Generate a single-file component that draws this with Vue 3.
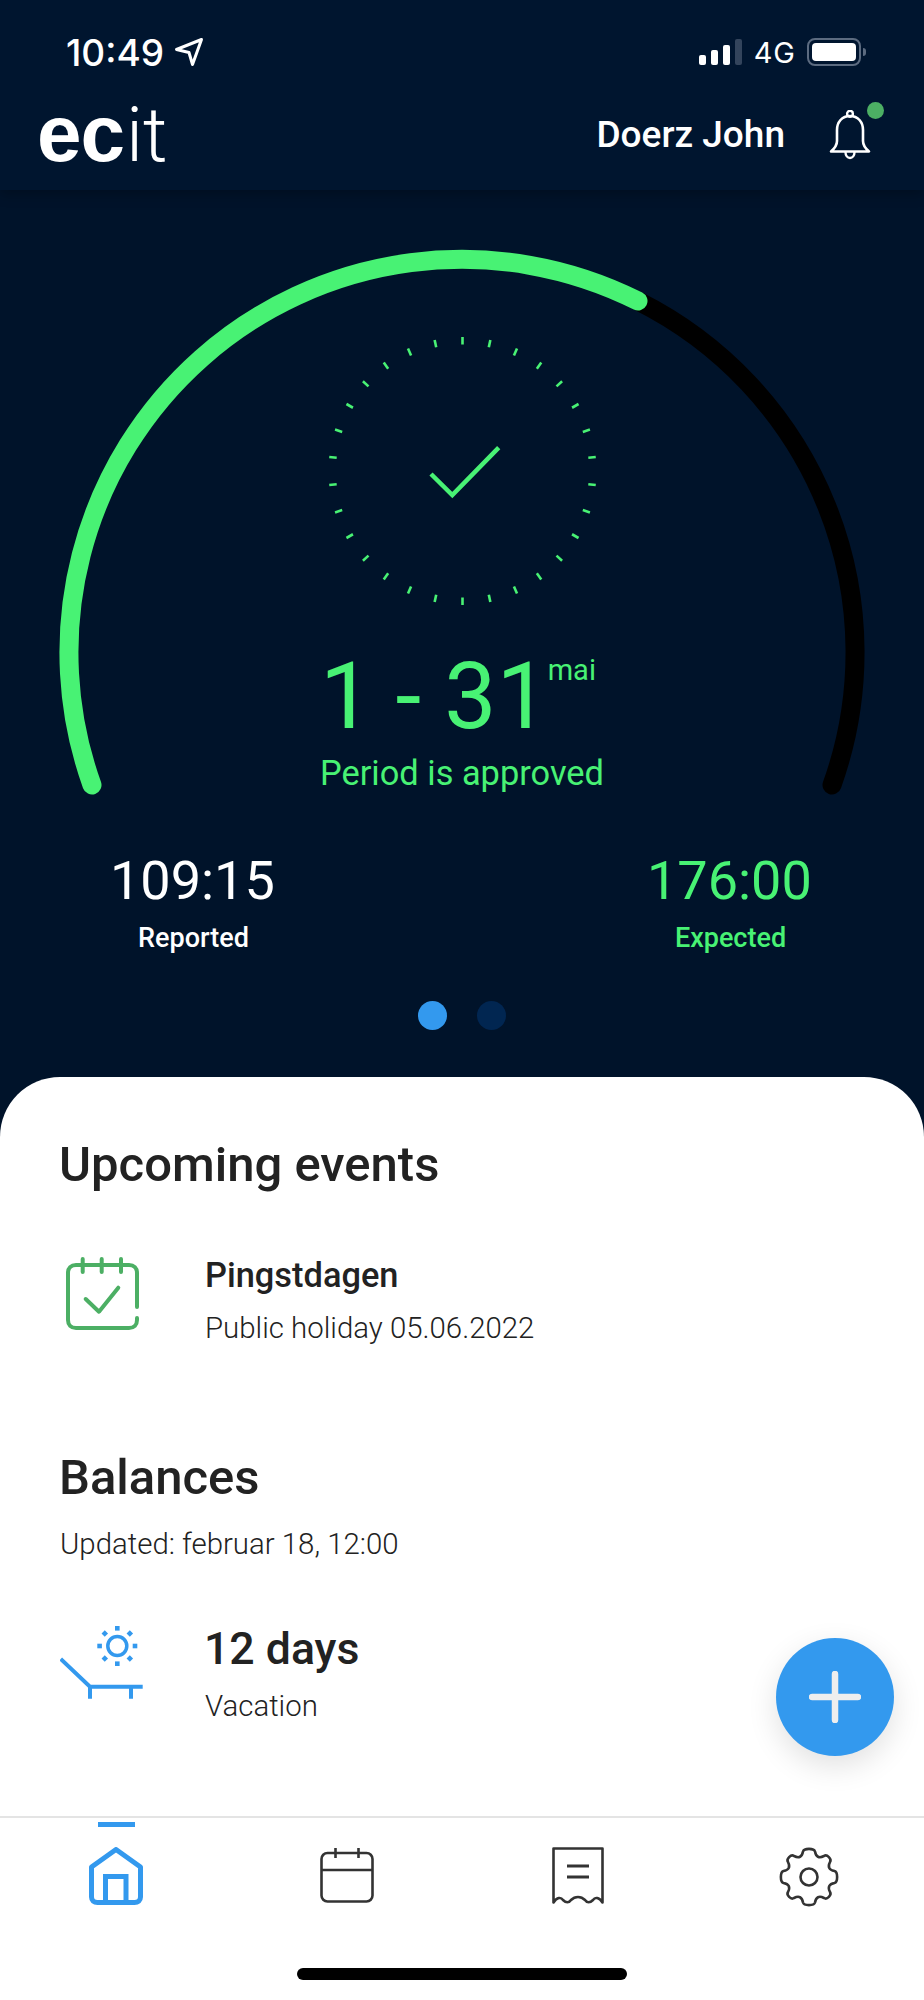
<script setup>
const ticks = Array.from({ length: 30 }, (_, i) => {
  const a = (i * 12 * Math.PI) / 180
  const cx = 462.5
  const cy = 471
  return {
    x1: cx + 126.5 * Math.sin(a),
    y1: cy - 126.5 * Math.cos(a),
    x2: cx + 134 * Math.sin(a),
    y2: cy - 134 * Math.cos(a)
  }
})
const rays = [0, 45, 90, 135, 180, 225, 270, 315]
</script>

<template>
  <div class="app">
    <header class="top">
      <div class="status">
        <div class="status-left">
          <span class="time">10:49</span>
          <svg class="nav-arrow" viewBox="0 0 30 30" width="30" height="30">
            <path d="M27.500 2.500 2.500 12.500 15 15.500 18.500 27.500Z" fill="none" stroke="#fff" stroke-width="3" stroke-linejoin="round" />
          </svg>
        </div>
        <div class="status-right">
          <div class="signal">
            <i class="bar b1"></i><i class="bar b2"></i><i class="bar b3"></i><i class="bar b4"></i>
          </div>
          <span class="net">4G</span>
          <div class="battery"><div class="battery-fill"></div></div>
          <div class="battery-nub"></div>
        </div>
      </div>
      <div class="brand-row">
        <div class="logo"><b>ec</b><span>it</span></div>
        <div class="user">
          <span class="user-name">Doerz John</span>
          <div class="bell">
            <svg viewBox="0 0 42 50" width="42" height="50">
              <path d="M2 41.500c3.500-3 6-5.500 6-10.500V20c0-8 5-14 13-14s13 6 13 14v11c0 5 2.500 7.500 6 10.500Z" fill="none" stroke="#fff" stroke-width="2.600" stroke-linejoin="round" />
              <circle cx="21" cy="3.800" r="2.900" fill="none" stroke="#fff" stroke-width="2.400" />
              <path d="M16.500 42c0 3.500 2 6 4.500 6s4.500-2.500 4.500-6" fill="none" stroke="#fff" stroke-width="2.400" />
            </svg>
            <span class="bell-dot"></span>
          </div>
        </div>
      </div>
    </header>

    <section class="hero">
      <svg class="dial" viewBox="0 190 924 640" width="924" height="640">
        <path d="M638 301A393 393 0 0 1 832 785" fill="none" stroke="#000" stroke-width="19" stroke-linecap="round" />
        <path d="M92 785A393 393 0 0 1 638 301" fill="none" stroke="#48f274" stroke-width="19" stroke-linecap="round" />
        <line v-for="(t, i) in ticks" :key="i" :x1="t.x1" :y1="t.y1" :x2="t.x2" :y2="t.y2" stroke="#48f274" stroke-width="2.600" />
        <path d="M431 474 452.300 495 498.700 447.700" fill="none" stroke="#48f274" stroke-width="4.500" />
      </svg>

      <div class="period">
        <div class="period-range">
          <span>1 - 31</span>
          <sup class="period-month">mai</sup>
        </div>
        <div class="period-state">Period is approved</div>
      </div>

      <div class="totals">
        <div class="total">
          <div class="total-value">109:15</div>
          <div class="total-label">Reported</div>
        </div>
        <div class="total green">
          <div class="total-value">176:00</div>
          <div class="total-label">Expected</div>
        </div>
      </div>

      <div class="dots">
        <span class="dot active"></span>
        <span class="dot"></span>
      </div>
    </section>

    <main class="sheet">
      <h2 class="title">Upcoming events</h2>
      <div class="row event">
        <svg class="row-icon" viewBox="0 0 90 76" width="90" height="76">
          <path d="M77 50V16c0-5-3-8-8-8H16c-5 0-8 3-8 8v47c0 5 3 8 8 8h53c5 0 8-3 8-8v-2" fill="none" stroke="#4caf64" stroke-width="4" stroke-linecap="round" />
          <path d="M22.700 2v13M41.700 2v13M61 2v13" stroke="#4caf64" stroke-width="4" stroke-linecap="round" />
          <path d="M25.700 42 39 54.700 58.300 30.700" fill="none" stroke="#4caf64" stroke-width="4" stroke-linecap="round" stroke-linejoin="round" />
        </svg>
        <div>
          <div class="row-head">Pingstdagen</div>
          <div class="row-sub">Public holiday 05.06.2022</div>
        </div>
      </div>

      <h2 class="title balances">Balances</h2>
      <div class="updated">Updated: februar 18, 12:00</div>
      <div class="row balance">
        <svg class="row-icon sun-icon" viewBox="0 0 90 80" width="90" height="80">
          <path d="M.700 35 30 62.700H82.700M30 62.700V74.700M71 62.700V74.700" fill="none" stroke="#3399ee" stroke-width="4" />
          <circle cx="57.300" cy="22" r="9.500" fill="none" stroke="#3399ee" stroke-width="3.500" />
          <rect v-for="r in rays" :key="r" x="55" y="2" width="4.600" height="4.600" fill="#3399ee" :transform="`rotate(${r} 57.300 22)`" />
        </svg>
        <div>
          <div class="row-big">12 days</div>
          <div class="row-sub">Vacation</div>
        </div>
      </div>
      <button class="fab">
        <svg viewBox="0 0 52 52" width="52" height="52">
          <path d="M26 3v46M3 26h46" stroke="#eee" stroke-width="6.500" stroke-linecap="round" />
        </svg>
      </button>
    </main>

    <nav class="tabs">
      <div class="tab active">
        <span class="tab-mark"></span>
        <svg viewBox="0 0 54 58" width="54" height="58">
          <path d="M27 2.500 51.500 20V50c0 3.500-2.500 5.500-6 5.500H8.500c-3.500 0-6-2-6-5.500V20Z" fill="none" stroke="#3399ee" stroke-width="5" stroke-linejoin="round" />
          <path d="M16.500 56V29.500H37V56" fill="none" stroke="#3399ee" stroke-width="5" />
        </svg>
      </div>
      <div class="tab">
        <svg viewBox="0 0 54 56" width="54" height="56">
          <rect x="1.500" y="6" width="51" height="48.500" rx="6" fill="none" stroke="#333" stroke-width="2.600" />
          <path d="M1.500 23H52.500M15.500 1V11M38.500 1V11" stroke="#333" stroke-width="2.600" />
        </svg>
      </div>
      <div class="tab">
        <svg viewBox="0 0 52 58" width="52" height="58">
          <path d="M1.500 1.500H50.500V55.500C47 50 43 50 41 53 38 56 35 56 33 53 30 50 26 50 26 50 26 50 22 50 19 53 17 56 14 56 11 53 9 50 5 50 1.500 55.500Z" fill="none" stroke="#333" stroke-width="2.600" stroke-linejoin="round" />
          <path d="M15 19H37M15 30H37" stroke="#333" stroke-width="2.800" />
        </svg>
      </div>
      <div class="tab">
        <svg viewBox="0 0 60 60" width="60" height="60">
          <path d="M24 4.500C25 1 35 1 36 4.500 37 10 40 11.500 45 9 48 7 53 12 51 15 48.500 20 50 23 55.500 24 59 25 59 35 55.500 36 50 37 48.500 40 51 45 53 48 48 53 45 51 40 48.500 37 50 36 55.500 35 59 25 59 24 55.500 23 50 20 48.500 15 51 12 53 7 48 9 45 11.500 40 10 37 4.500 36 1 35 1 25 4.500 24 10 23 11.500 20 9 15 7 12 12 7 15 9 20 11.500 23 10 24 4.500Z" fill="none" stroke="#333" stroke-width="2.600" stroke-linejoin="round" />
          <circle cx="30" cy="30" r="8.500" fill="none" stroke="#333" stroke-width="2.600" />
        </svg>
      </div>
    </nav>
    <div class="home-bar"></div>
  </div>
</template>

<style>
body {
  margin: 0;
  background: #fff;
}
</style>

<style scoped>
.app {
  position: relative;
  width: 924px;
  height: 2000px;
  overflow: hidden;
  background: #00132a;
  font-family: Roboto, "Liberation Sans", sans-serif;
}

.top {
  height: 190px;
  box-sizing: border-box;
  background: #00152f;
  box-shadow: 0 4px 12px rgba(0, 0, 0, 0.25);
  color: #fff;
  position: relative;
  z-index: 1;
}

.status {
  display: flex;
  justify-content: space-between;
  align-items: center;
  height: 52px;
  padding: 26px 58px 0 66px;
}

.status-left {
  display: flex;
  align-items: center;
  gap: 10px;
}

.time {
  font-family: Inter, sans-serif;
  font-size: 37px;
  font-weight: 500;
}

.status-right {
  display: flex;
  align-items: center;
}

.signal {
  display: flex;
  align-items: flex-end;
  gap: 5px;
  height: 26px;
  margin-right: 12px;
}

.bar {
  display: block;
  width: 7px;
  border-radius: 2px;
  background: #fff;
}

.b1 { height: 10px; }
.b2 { height: 15px; }
.b3 { height: 20px; }
.b4 { height: 26px; background: #33445c; }

.net {
  font-family: Inter, sans-serif;
  font-size: 29px;
  letter-spacing: 1px;
  margin-right: 11px;
}

.battery {
  width: 54px;
  height: 28px;
  box-sizing: border-box;
  border: 2px solid #5c6b80;
  border-radius: 8px;
  padding: 3px;
}

.battery-fill {
  height: 100%;
  border-radius: 4px;
  background: #fff;
}

.battery-nub {
  width: 3px;
  height: 8px;
  margin-left: 2px;
  border-radius: 0 3px 3px 0;
  background: #5c6b80;
}

.brand-row {
  display: flex;
  justify-content: space-between;
  align-items: center;
  padding: 16px 53px 0 37px;
}

.logo {
  font-family: "Liberation Sans", sans-serif;
  font-size: 80px;
  line-height: 80px;
  letter-spacing: -1px;
}

.logo b {
  font-weight: 700;
}

.logo span {
  font-family: Roboto, sans-serif;
  font-size: 76px;
  font-weight: 300;
  letter-spacing: 0;
  margin-left: 2px;
}

.user {
  display: flex;
  align-items: center;
  gap: 44px;
}

.user-name {
  font-size: 37px;
  font-weight: 500;
}

.bell {
  position: relative;
  width: 42px;
  height: 50px;
}

.bell-dot {
  position: absolute;
  top: -8px;
  left: 38px;
  width: 17px;
  height: 17px;
  border-radius: 50%;
  background: #4caf64;
}

.hero {
  position: relative;
  height: 887px;
  box-sizing: border-box;
  padding-top: 453px;
}

.dial {
  position: absolute;
  top: 0;
  left: 0;
}

.period {
  position: relative;
  text-align: center;
  color: #48f274;
}

.period-range {
  display: flex;
  justify-content: center;
  align-items: flex-start;
  font-size: 93px;
  font-weight: 400;
  line-height: 108px;
}

.period-month {
  margin: 11px 8px 0 -1px;
  font-size: 29px;
  font-weight: 400;
  line-height: 32px;
}

.period-state {
  font-size: 34.4px;
  line-height: 44px;
}

.totals {
  display: grid;
  grid-template-columns: repeat(2, 164px);
  justify-content: space-between;
  padding: 54px 113px 0 110px;
}

.total {
  text-align: center;
  color: #fff;
}

.total.green {
  color: #48f274;
}

.total-value {
  font-size: 54px;
  font-weight: 400;
  line-height: 64px;
}

.total-label {
  font-size: 27px;
  font-weight: 500;
  line-height: 36px;
  margin-top: 7px;
  margin-left: 3px;
}

.dots {
  display: flex;
  justify-content: center;
  gap: 30px;
  margin-top: 45px;
}

.dot {
  width: 29px;
  height: 29px;
  border-radius: 50%;
  background: #012651;
}

.dot.active {
  background: #3399ee;
}

.sheet {
  position: relative;
  height: 739px;
  box-sizing: border-box;
  padding: 60px 60px 0;
  border-radius: 60px 60px 0 0;
  background: #fff;
  color: #222;
  z-index: 2;
}

.title {
  margin: 0 0 0 -1px;
  font-size: 49px;
  font-weight: 500;
  line-height: 56px;
}

.row {
  display: flex;
  align-items: flex-start;
}

.row-icon {
  flex: none;
  margin-right: 55px;
  margin-top: 2px;
}

.sun-icon {
  margin-top: -1px;
}

.event {
  margin-top: 62px;
}

.row-head {
  font-size: 34.4px;
  font-weight: 500;
  line-height: 40px;
}

.row-big {
  font-size: 44.6px;
  font-weight: 500;
  line-height: 48px;
  margin-left: -1px;
}

.row-sub {
  margin-top: 13px;
  font-size: 29.4px;
  font-weight: 300;
  line-height: 40px;
}

.balances {
  margin-top: 102px;
}

.updated {
  margin-top: 18px;
  font-size: 29.4px;
  font-weight: 300;
  line-height: 40px;
}

.balance {
  margin-top: 61px;
}

.fab {
  position: absolute;
  top: 561px;
  left: 776px;
  display: flex;
  align-items: center;
  justify-content: center;
  width: 118px;
  height: 118px;
  padding: 0;
  border: 0;
  border-radius: 50%;
  background: #3399ee;
  box-shadow: 0 10px 30px rgba(0, 0, 0, 0.12);
}

.tabs {
  position: relative;
  z-index: 3;
  display: grid;
  grid-template-columns: repeat(4, 231px);
  height: 184px;
  box-sizing: border-box;
  border-top: 2px solid #e4e4e4;
  background: #fff;
}

.tab {
  position: relative;
  display: flex;
  justify-content: center;
  padding-top: 29px;
}

.tab-mark {
  position: absolute;
  top: 4px;
  left: 98px;
  width: 37px;
  height: 5px;
  background: #3399ee;
}

.home-bar {
  position: absolute;
  z-index: 4;
  left: 297px;
  top: 1968px;
  width: 330px;
  height: 12px;
  border-radius: 6px;
  background: #000;
}
</style>
